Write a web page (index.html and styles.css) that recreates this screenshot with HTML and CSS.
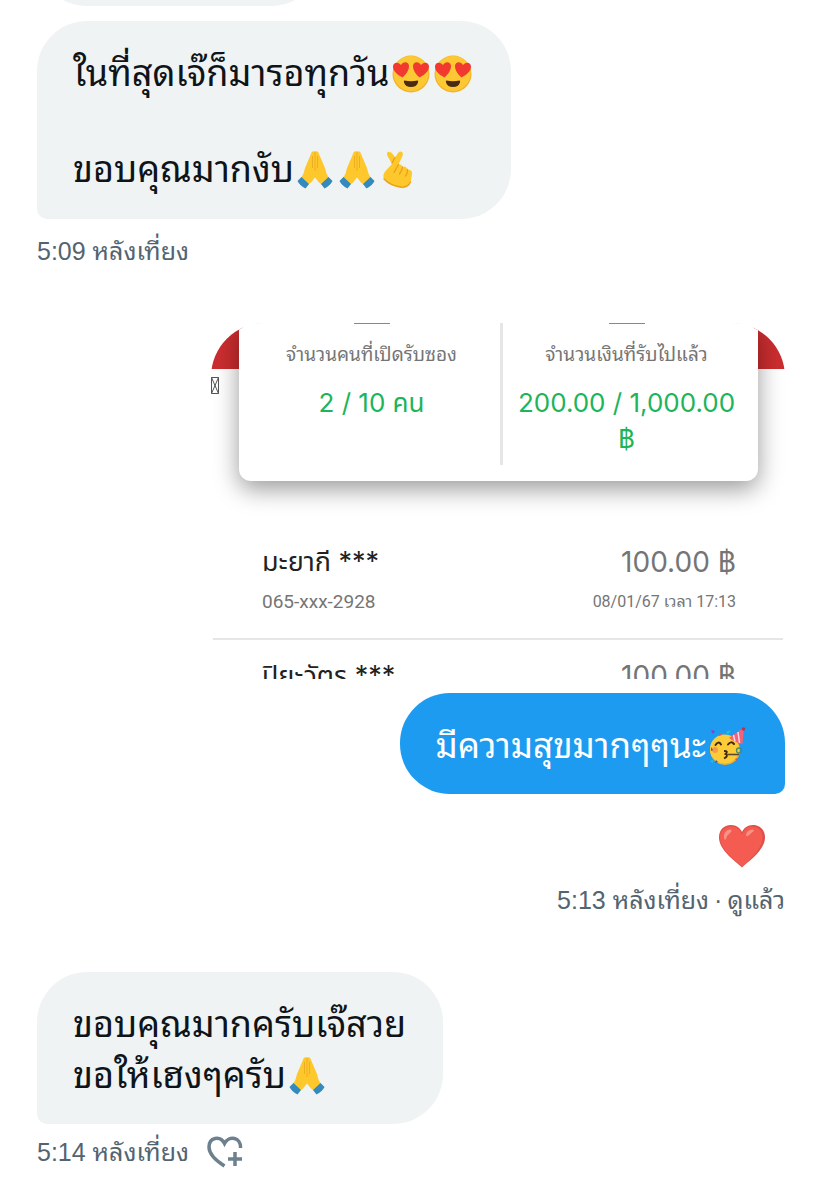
FILE: index.html
```html
<!DOCTYPE html>
<html lang="th">
<head>
<meta charset="utf-8">
<meta name="viewport" content="width=device-width, initial-scale=1">
<title>ข้อความ</title>
<link rel="stylesheet" href="styles.css">
</head>
<body>
<svg class="defs" aria-hidden="true">
  <symbol id="love" viewBox="0 0 38 38">
    <circle cx="19" cy="19" r="18.5" fill="#f2b229"/>
    <circle cx="19" cy="18.5" r="17.5" fill="#fcc934"/>
    <path d="M12.500 25.500Q19 27 25.500 25.500Q26.500 25.500 26 27.500Q24.500 32 19 32Q13.500 32 12 27.500Q11.500 25.500 12.500 25.500Z" fill="#4b2c12"/>
    <path d="M10.500 22.500C5 19.500 1 16 1 11.500C1 8 5.500 6 9 10C11.500 5.500 17 7 17 11C17 15.500 14 19.500 10.500 22.500Z" fill="#f1392f"/>
    <path d="M27.500 22.500C24 19.500 21 15.500 21 11C21 7 26.500 5.500 29 10C32.500 6 37 8 37 11.500C37 16 33 19.500 27.500 22.500Z" fill="#f1392f"/>
  </symbol>
  <symbol id="pray" viewBox="0 0 38 38">
    <path d="M19 0.500C16.500 0 15.500 1 15 3L9 17C8 20 8 23 5.500 26L3.500 29L10.500 35L15 31.500L19 26.500L23 31.500L27.500 35L34.500 29L32.500 26C30 23 30 20 29 17L23 3C22.500 1 21.500 0 19 0.500Z" fill="#fec82c"/>
    <path d="M19 1V20M16.500 5L16.500 17M21.500 5L21.500 17" fill="none" stroke="#eeae22" stroke-width="1"/>
    <path d="M5.500 26L13 33L9.500 37.500Q4 35 1.500 30ZM32.500 26L25 33L28.500 37.500Q34 35 36.500 30Z" fill="#3489bd"/>
  </symbol>
  <symbol id="fingers" viewBox="0 0 38 38">
    <path d="M12 13L7.500 5Q6 1.500 8.500 .8Q11 .5 13.500 4L15 6.500L18 2Q20.500 -.5 22.500 1.500Q23.500 3 22 6L18.500 13.500Q21.500 12.500 22.500 16Q26 14.500 27.500 18.500Q32.500 18.500 32 23L30.500 32Q28 38 21 37Q9 35 4 28Q2.500 24 5 20.500Z" fill="#fec82c"/>
    <path d="M15 6.500L12 12M18.500 13.500L14 21.500M22.500 16Q22.500 19 19.500 23M27.500 18.500Q28 22 25.500 25M4 28Q10 34.500 21 36Q28 36.500 30.500 31" fill="none" stroke="#e7a11b" stroke-width="1.300" stroke-linecap="round"/>
  </symbol>
  <symbol id="party" viewBox="0 0 38 38">
    <circle cx="17" cy="23" r="15" fill="#efb12c"/>
    <circle cx="16.500" cy="22" r="14.500" fill="#fccb38"/>
    <path d="M21 11L36 0.500L34.500 17Q29 16.500 21 11Z" fill="#f2627a"/>
    <path d="M25.500 8L27 14.500M30 5L31.500 16" stroke="#fbd5df" stroke-width="1.500"/>
    <circle cx="35.500" cy="2" r="1.800" fill="#b3355c"/>
    <path d="M7.500 18Q10.500 13.500 13 17.500M20 17.500Q23 13.500 26 17" fill="none" stroke="#43280f" stroke-width="2" stroke-linecap="round"/>
    <path d="M16 24Q21 24 17.500 27Q21 29 16 31.500" fill="none" stroke="#43280f" stroke-width="1.800"/>
    <path d="M19 27.500H31" stroke="#5b4630" stroke-width="1.600"/>
    <circle cx="31" cy="23.500" r="2.500" fill="none" stroke="#4a8c6f" stroke-width="1.300"/>
    <circle cx="7" cy="23" r="3" fill="#f79a4b"/>
    <path d="M3 3L7 4L5 7Z" fill="#a02fd0"/>
    <path d="M18 5L23 3L20 7ZM2 34L5 33L5 36Z" fill="#21c1ea"/>
    <path d="M11 6L14 8L11 9ZM27 32L30 31L29 34Z" fill="#ef4b5a"/>
    <path d="M3 20L5 23L3 24ZM8 33L10 35L7 36Z" fill="#4656b8"/>
  </symbol>
</svg>
<main class="chat">
  <div class="cut"><div class="bubble in past"></div></div>

  <section class="group">
    <div class="bubble in airy">
      <p>ในที่สุดเจ๊ก็มารอทุกวัน<svg class="emoji" role="img" aria-label="😍"><use href="#love"/></svg><svg class="emoji" role="img" aria-label="😍"><use href="#love"/></svg></p>
      <p><br></p>
      <p>ขอบคุณมากงับ<svg class="emoji" role="img" aria-label="🙏"><use href="#pray"/></svg><svg class="emoji" role="img" aria-label="🙏"><use href="#pray"/></svg><svg class="emoji" role="img" aria-label="🫰"><use href="#fingers"/></svg></p>
    </div>
    <div class="meta"><time>5:09 หลังเที่ยง</time></div>
  </section>

  <section class="group own">
    <div class="photo">
      <div class="banner"></div>
      <svg class="tofu" viewBox="0 0 8 17" aria-hidden="true"><path d="M.5 .5H7.500V16.500H.5ZL7.500 16.500M7.500 .5L.5 16.500" fill="none" stroke="#555"/></svg>
      <div class="card">
        <div class="stat">
          <span class="rule"></span>
          <h2>จำนวนคนที่เปิดรับซอง</h2>
          <strong>2 / 10 คน</strong>
        </div>
        <div class="stat">
          <span class="rule"></span>
          <h2>จำนวนเงินที่รับไปแล้ว</h2>
          <strong>200.00 / 1,000.00 ฿</strong>
        </div>
      </div>
      <ul class="list">
        <li>
          <div class="row name"><span>มะยากี ***</span><span class="sum">100.00 ฿</span></div>
          <div class="row sub"><span class="phone">065-xxx-2928</span><span>08/01/67 เวลา 17:13</span></div>
        </li>
        <li>
          <div class="row name"><span>ปิยะวัตร ***</span><span class="sum">100.00 ฿</span></div>
        </li>
      </ul>
    </div>
    <div class="bubble out">
      <p>มีความสุขมากๆๆนะ<svg class="emoji" role="img" aria-label="🥳"><use href="#party"/></svg></p>
    </div>
    <svg class="heart" viewBox="0 0 46 43" role="img" aria-label="❤️">
      <path d="M23 42.500C19 38 0 26 0 12.500C0 4 6 0 12 0C17.500 0 21 3 23 7C25 3 28.500 0 34 0C40 0 46 4 46 12.500C46 26 27 38 23 42.500Z" fill="#dc5048"/>
      <path d="M23 42C19 37 1 26 1 12.500C1 5 6.500 1.500 12 1.500C17.500 1.500 21 5 23 9.500C25 5 28 1.500 33 1.500C38.500 1.500 43.500 5 43.500 12.500C43.500 26 27 37 23 42Z" fill="#f55c51"/>
      <path d="M5 13Q4 6 11 4.500Q14 5 11 8Q8 10 7 14Q5.500 15.500 5 13ZM27 9Q29 4.500 34 4.500Q36 5.500 33 7.500L29 11Q26.500 12 27 9Z" fill="#f89186"/>
    </svg>
    <div class="meta"><time>5:13 หลังเที่ยง</time><span>·</span><span>ดูแล้ว</span></div>
  </section>

  <section class="group last">
    <div class="bubble in">
      <p>ขอบคุณมากครับเจ๊สวย</p>
      <p>ขอให้เฮงๆครับ<svg class="emoji" role="img" aria-label="🙏"><use href="#pray"/></svg></p>
    </div>
    <div class="meta"><time>5:14 หลังเที่ยง</time>
      <button class="react" type="button" aria-label="เพิ่มรีแอ็กชัน">
        <svg viewBox="0 0 36 32" fill="none" stroke="#6c808d" stroke-width="3.500"><path d="M17.500 30C8 24 2 18 2 11C2 1.500 13 -1 17.500 7.500C22 -1 34 1 33.500 12"/><path d="M28 16V30M21 23H35"/></svg>
      </button>
    </div>
  </section>
</main>
</body>
</html>
```
FILE: styles.css
```css
* { box-sizing: border-box; }
body {
  margin: 0;
  background: #fff;
  color: #0f1419;
  font-family: "Liberation Sans", "Noto Sans Thai Looped", "Noto Looped Thai", Loma, Waree, Garuda, "Noto Sans Thai", sans-serif;
}
p, h2, ul { margin: 0; padding: 0; }
.defs { position: absolute; width: 0; height: 0; }

.chat { padding: 0 37px; }
.cut {
  display: flex;
  align-items: flex-end;
  height: 6px;
  margin-bottom: 15px;
  overflow: hidden;
}
.group { display: flex; flex-direction: column; align-items: flex-start; }
.own { align-items: flex-end; margin: 52px 0 52px; }

.bubble {
  padding: 27px 37px 23px 36px;
  font-size: 36px;
  line-height: 51px;
  white-space: nowrap;
}
.in { background: #eff3f4; border-radius: 50px 50px 50px 10px; }
.out { background: #1d9bf0; color: #fff; border-radius: 50px 50px 10px 50px; margin-top: 14px; font-size: 35px; }
.airy { padding-top: 29px; padding-bottom: 25px; line-height: 48px; }
.past { flex: none; width: 284px; height: 102px; border-radius: 50px; }
.emoji { width: 38px; height: 38px; margin: 0 2px; vertical-align: -7px; }

.meta {
  display: flex;
  align-items: center;
  gap: 5px;
  margin-top: 12px;
  color: #536471;
  font-size: 25px;
  line-height: 40px;
}
.last .meta { margin-top: 8px; }
.react { margin-left: 13px; padding: 0; border: 0; background: none; line-height: 0; }
.react svg { width: 36px; height: 32px; }
.heart { width: 46px; height: 43px; margin: 31px 20px 0 0; }

.photo {
  position: relative;
  width: 574px;
  max-width: 100%;
  height: 356px;
  border-radius: 54px;
  overflow: hidden;
}
.banner {
  position: absolute;
  inset: 0 0 auto;
  height: 46px;
  background: linear-gradient(90deg, #cb2d2f 32px, transparent 32px calc(100% - 32px), #cb2d2f calc(100% - 32px));
}
.tofu { position: absolute; left: 0; top: 54px; width: 8px; height: 17px; }
.card {
  position: relative;
  display: grid;
  grid-template-columns: 1fr 258px;
  height: 158px;
  margin: 0 27px 0 28px;
  padding-bottom: 16px;
  border-radius: 0 0 12px 12px;
  background: #fff;
  box-shadow: 0 8px 24px rgba(0, 0, 0, .4);
}
.stat {
  display: flex;
  flex-direction: column;
  align-items: center;
  padding: 0 12px 0 16px;
  text-align: center;
}
.stat + .stat { padding: 0 20px 0 12px; border-left: 3px solid #e6e6e6; }
.rule { width: 36px; height: 1px; background: #888; }
.stat h2 { margin-top: 14px; color: #757575; font-size: 19px; font-weight: 400; line-height: 34px; white-space: nowrap; }
.stat strong { margin-top: 13px; color: #1db45a; font-family: Inter, "Noto Sans Thai", "Noto Sans", sans-serif; font-size: 26px; font-weight: 400; line-height: 36px; }

.list { list-style: none; }
.list li { padding: 61px 49px 19px 51px; }
.list li + li { padding-top: 16px; border-top: 2px solid #e6e6e6; }
.row { display: flex; justify-content: space-between; }
.name { color: #222; font-family: Inter, "Noto Sans Thai", "Noto Sans", sans-serif; font-size: 27px; line-height: 40px; }
.sum { color: #757575; font-size: 28px; }
.sub { margin-top: 3px; color: #757575; font-family: Roboto, "Noto Sans Thai Looped", "Noto Looped Thai", Loma, Waree, Garuda, sans-serif; font-size: 16px; line-height: 34px; }
.phone { font-size: 19px; }
```
